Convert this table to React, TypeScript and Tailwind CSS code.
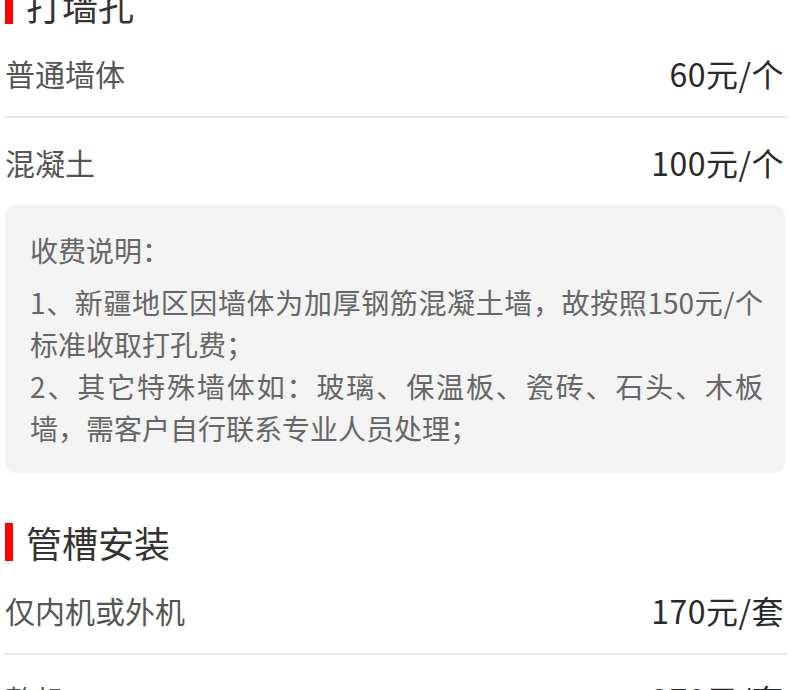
import React from "react";

const font = { fontFamily: '"Noto Sans CJK SC", "Noto Sans", sans-serif' };

function Title({ text }: { text: string }) {
  return (
    <div className="flex h-[48px] items-center">
      <div className="ml-[2px] h-[38px] w-[8px] bg-[#ff0000]" />
      <div className="ml-[13px] text-[36px] leading-none text-[#333333]">{text}</div>
    </div>
  );
}

function Row({ label, price }: { label: string; price: string }) {
  return (
    <div className="flex h-[87px] items-center justify-between pl-[2px] pr-[3px]">
      <span className="text-[30px] leading-none text-[#555555]">{label}</span>
      <span className="text-[32px] leading-none tracking-[0.5px] text-[#2a2a2a]">{price}</span>
    </div>
  );
}

function Divider() {
  return <div className="h-[2px] bg-[#e8e8e8]" />;
}

export default function App() {
  return (
    <div className="h-[690px] w-[790px] overflow-hidden bg-white px-[3px]" style={font}>
      <div className="-mt-[19px]">
        <Title text="打墙孔" />
        <Row label="普通墙体" price="60元/个" />
        <Divider />
        <Row label="混凝土" price="100元/个" />
        <div className="mx-[2px] rounded-[10px] bg-[#f3f3f3] pb-[24px] pl-[25px] pr-[22px] pt-[24px] text-[28px] leading-[42px] text-[#666666]">
          <div className="mb-[10px]">收费说明：</div>
          <div className="text-justify [text-align-last:justify]">1、新疆地区因墙体为加厚钢筋混凝土墙，故按照150元/个</div>
          <div>标准收取打孔费；</div>
          <div className="text-justify [text-align-last:justify]">2、其它特殊墙体如：玻璃、保温板、瓷砖、石头、木板</div>
          <div>墙，需客户自行联系专业人员处理；</div>
        </div>
        <div className="mt-[45px]">
          <Title text="管槽安装" />
        </div>
        <Row label="仅内机或外机" price="170元/套" />
        <Divider />
        <Row label="整机" price="270元/套" />
      </div>
    </div>
  );
}
